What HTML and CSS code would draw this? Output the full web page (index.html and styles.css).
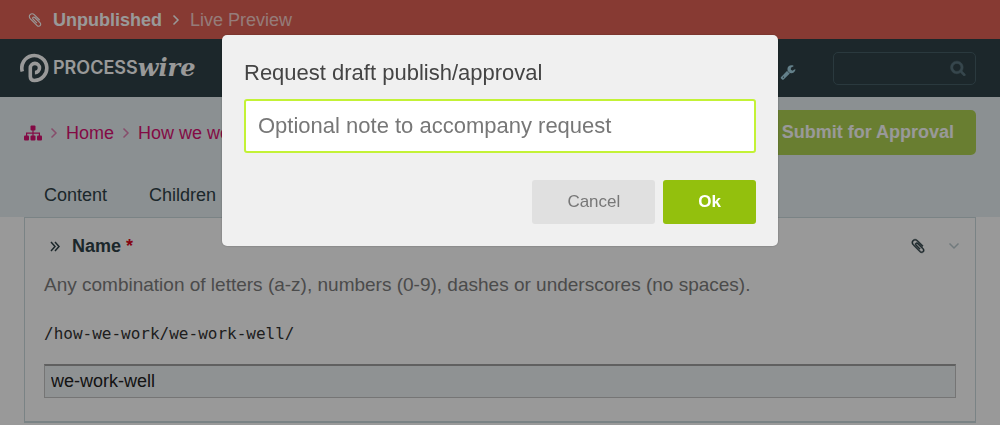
FILE: index.html
```html
<!DOCTYPE html>
<html lang="en">
<head>
    <meta charset="UTF-8">
    <meta name="viewport" content="width=device-width, initial-scale=1.0">
    <title>We work well - ProcessWire</title>
    <link rel="stylesheet" href="styles.css">
</head>
<body>
    <div class="notice">
        <svg class="icon" viewBox="0 0 1792 1792"><path d="M1596 1385q0 117-79 196t-196 79q-135 0-235-100l-777-776q-113-115-113-271 0-159 110-270t269-111q158 0 273 113l605 606q10 10 10 22 0 16-30.500 46.500t-46.500 30.500q-13 0-23-10l-606-607q-79-77-181-77-106 0-179 75t-73 181q0 105 76 181l776 777q63 63 145 63 64 0 106-42t42-106q0-82-63-145l-581-581q-26-24-60-24-29 0-48 19t-19 48q0 32 25 59l410 410q10 10 10 22 0 16-31 47t-47 31q-12 0-22-10l-410-410q-63-61-63-149 0-82 57-139t139-57q88 0 149 63l581 581q100 98 100 235z"/></svg>
        <strong>Unpublished</strong>
        <svg class="angle" viewBox="0 0 8 12"><path d="M1.500 1.500L6 6l-4.500 4.500"/></svg>
        <a href="#">Live Preview</a>
    </div>

    <header class="masthead">
        <a class="logo" href="#">
            <svg class="logo-mark" viewBox="0 0 30 30"><path d="M2.300 18.500A12.500 12.500 0 1 1 14.500 27.500Q10.300 27.500 10.300 23.500V15a4.600 4.600 0 1 1 4.600 4.600"/></svg>
            <span class="logo-process">PROCESS</span><span class="logo-wire">wire</span>
        </a>
        <div class="tools">
            <a class="wrench" href="#" aria-label="Tools">
                <svg class="icon" viewBox="0 0 1792 1792"><path d="M448 1472q0-26-19-45t-45-19-45 19-19 45 19 45 45 19 45-19 19-45zm644-420l-682 682q-37 37-90 37-52 0-91-37l-106-108q-38-36-38-90 0-53 38-91l681-681q39 98 114.500 173.500t173.500 114.500zm634-435q0 39-23 106-47 134-164.500 217.500t-258.500 83.500q-185 0-316.500-131.500t-131.500-316.500 131.500-316.500 316.500-131.500q58 0 121.500 16.500t107.500 46.500q16 11 16 28t-16 28l-293 169v224l193 107q5-3 79-48.500t135.500-81 70.500-35.500q15 0 23.500 10t8.500 25z"/></svg>
            </a>
            <label class="search">
                <input type="text" aria-label="Search">
                <svg class="icon" viewBox="0 0 1792 1792"><path d="M1216 832q0-185-131.500-316.500t-316.500-131.500-316.500 131.500-131.500 316.500 131.500 316.500 316.500 131.500 316.500-131.500 131.500-316.500zm512 832q0 52-38 90t-90 38q-54 0-90-38l-343-342q-179 124-399 124-143 0-273.500-55.500t-225-150-150-225-55.500-273.500 55.500-273.500 150-225 225-150 273.500-55.500 273.500 55.500 225 150 150 225 55.500 273.500q0 220-124 399l343 343q37 37 37 90z"/></svg>
            </label>
        </div>
    </header>

    <div class="heading">
        <div class="heading-row">
            <nav class="breadcrumb">
                <a href="#" aria-label="Pages">
                    <svg class="sitemap" viewBox="0 0 18 16"><rect x="6.500" y="0.500" width="5" height="5" rx="1"/><rect x="0" y="10.500" width="5" height="5" rx="1"/><rect x="6.500" y="10.500" width="5" height="5" rx="1"/><rect x="13" y="10.500" width="5" height="5" rx="1"/><path d="M2 11V7.500h14V11h-1.200V8.700H9.600V11H8.400V8.700H3.200V11zM8.400 5h1.200v3H8.400z"/></svg>
                </a>
                <svg class="angle" viewBox="0 0 8 12"><path d="M1.500 1.500L6 6l-4.500 4.500"/></svg>
                <a href="#">Home</a>
                <svg class="angle" viewBox="0 0 8 12"><path d="M1.500 1.500L6 6l-4.500 4.500"/></svg>
                <a href="#">How we work</a>
            </nav>
            <button class="btn-submit" type="button">Submit for Approval</button>
        </div>
        <nav class="tabs">
            <a href="#">Content</a>
            <a href="#">Children</a>
        </nav>
    </div>

    <main class="content">
        <section class="field">
            <div class="field-header">
                <svg class="double-angle" viewBox="0 0 10 11"><path d="M1 1l4 4.500L1 10M5 1l4 4.500L5 10"/></svg>
                <label for="name">Name <span class="required">*</span></label>
                <svg class="icon clip" viewBox="0 0 1792 1792"><path d="M1596 1385q0 117-79 196t-196 79q-135 0-235-100l-777-776q-113-115-113-271 0-159 110-270t269-111q158 0 273 113l605 606q10 10 10 22 0 16-30.500 46.500t-46.500 30.500q-13 0-23-10l-606-607q-79-77-181-77-106 0-179 75t-73 181q0 105 76 181l776 777q63 63 145 63 64 0 106-42t42-106q0-82-63-145l-581-581q-26-24-60-24-29 0-48 19t-19 48q0 32 25 59l410 410q10 10 10 22 0 16-31 47t-47 31q-12 0-22-10l-410-410q-63-61-63-149 0-82 57-139t139-57q88 0 149 63l581 581q100 98 100 235z"/></svg>
                <svg class="toggle" viewBox="0 0 12 8"><path d="M1.500 1.500L6 6l4.500-4.500"/></svg>
            </div>
            <p class="description">Any combination of letters (a-z), numbers (0-9), dashes or underscores (no spaces).</p>
            <p class="path">/how-we-work/we-work-well/</p>
            <input class="name-input" id="name" type="text" value="we-work-well">
        </section>
    </main>

    <div class="overlay">
        <form class="dialog" role="dialog">
            <label for="note">Request draft publish/approval</label>
            <input id="note" type="text" placeholder="Optional note to accompany request">
            <div class="dialog-buttons">
                <button class="btn-cancel" type="button">Cancel</button>
                <button class="btn-ok" type="button">Ok</button>
            </div>
        </form>
    </div>
</body>
</html>
```
FILE: styles.css
```css
*{
    box-sizing: border-box;
    padding: 0;
    margin: 0;
}
body{
    font-family: "Liberation Sans", Arial, sans-serif;
    font-size: 18px;
    line-height: 24px;
    color: #2f4248;
    background-color: #fff;
    overflow: hidden;
}
a{
    color: inherit;
    text-decoration: none;
}
svg{
    display: block;
    flex: none;
}
.icon{
    width: 16px;
    height: 16px;
    fill: currentColor;
}
.clip{
    stroke: currentColor;
    stroke-width: 50;
}
.angle{
    width: 8px;
    height: 12px;
    fill: none;
    stroke: currentColor;
    stroke-width: 1.5;
}

/* notice */
.notice{
    display: flex;
    align-items: center;
    gap: 10px;
    height: 39px;
    padding: 0 27px;
    background-color: #e26255;
    color: #fff;
}
.notice a{
    color: #f8cfcb;
}

/* masthead */
.masthead{
    display: flex;
    align-items: center;
    justify-content: space-between;
    height: 58px;
    padding: 0 24px 0 20px;
    background-color: #2f4248;
}
.logo{
    display: flex;
    align-items: center;
    color: #fff;
}
.logo-mark{
    width: 30px;
    height: 30px;
    margin-right: 3px;
    fill: none;
    stroke: currentColor;
    stroke-width: 3.6;
}
.logo-process{
    font-family: Inter, sans-serif;
    font-size: 18px;
    font-weight: 600;
}
.logo-wire{
    font-family: "DejaVu Serif", serif;
    font-size: 24px;
    font-weight: 700;
    font-style: italic;
}
.tools{
    display: flex;
    align-items: center;
    gap: 37px;
}
.wrench{
    padding-top: 8px;
    color: #a5d5e6;
}
.search{
    display: flex;
    align-items: center;
    width: 143px;
    height: 33px;
    padding: 0 9px;
    border: 1px solid #465f68;
    border-radius: 5px;
    color: #5b7680;
}
.search .icon{
    stroke: currentColor;
    stroke-width: 60;
}
.search input{
    flex: 1;
    min-width: 0;
    border: 0;
    outline: 0;
    background: none;
    color: #fff;
}

/* breadcrumb, submit button and tabs */
.heading{
    padding: 13px 24px 0;
    background-color: #e8f1f3;
}
.heading-row{
    display: flex;
    align-items: center;
    justify-content: space-between;
}
.breadcrumb{
    display: flex;
    align-items: center;
    gap: 8px;
    color: #db1174;
}
.breadcrumb .angle{
    opacity: 0.5;
}
.sitemap{
    width: 18px;
    height: 16px;
    fill: currentColor;
}
.btn-submit{
    height: 45px;
    padding: 0 22px;
    border: 0;
    border-radius: 5px;
    background-color: #b0d353;
    color: #fff;
    font: bold 18px "Liberation Sans", Arial, sans-serif;
}
.tabs{
    display: flex;
    gap: 42px;
    padding: 28px 20px 10px;
}

/* field */
.content{
    padding: 0 24px;
}
.field{
    padding: 16px 19px 23px;
    border: 1px solid #cbdade;
    border-bottom-width: 2px;
}
.field-header{
    display: flex;
    align-items: center;
    padding-left: 6px;
}
.field-header label{
    flex: 1;
    margin-left: 12px;
    font-weight: bold;
}
.required{
    color: #e00820;
}
.double-angle{
    width: 10px;
    height: 11px;
    fill: none;
    stroke: currentColor;
    stroke-width: 1.5;
}
.toggle{
    width: 12px;
    height: 8px;
    margin-left: 22px;
    margin-right: -4px;
    fill: none;
    stroke: #bccbd0;
    stroke-width: 1.5;
}
.description{
    margin-top: 15px;
    font-size: 19px;
    color: #7d7d7d;
}
.path{
    margin-top: 25px;
    font-family: "DejaVu Sans Mono", monospace;
    font-size: 16px;
    color: #333;
}
.name-input{
    display: block;
    width: 100%;
    height: 34px;
    margin-top: 18px;
    padding: 0 6px;
    border: 1px solid #c4c4c4;
    border-top: 2px solid #a0a0a0;
    background-color: #eff3f6;
    color: #222;
    font: 18px "Liberation Sans", Arial, sans-serif;
}

/* dialog */
.overlay{
    position: fixed;
    inset: 0;
    display: flex;
    align-items: flex-start;
    justify-content: center;
    padding-top: 35px;
    background-color: rgba(0, 0, 0, 0.4);
}
.dialog{
    width: 100%;
    max-width: 556px;
    padding: 22px;
    border-radius: 5px;
    background-color: #f0f0f0;
    box-shadow: 0 0 2px rgba(0, 0, 0, 0.3);
}
.dialog label{
    display: block;
    line-height: 32px;
    font-size: 22px;
    color: #444;
}
.dialog input{
    display: block;
    width: 100%;
    height: 54px;
    margin-top: 10px;
    padding: 0 12px;
    border: 2px solid #c3f236;
    border-radius: 3px;
    outline: 0;
    background-color: #fff;
    color: #444;
    font: 22px "Liberation Sans", Arial, sans-serif;
}
.dialog input::placeholder{
    color: #777;
}
.dialog-buttons{
    display: flex;
    justify-content: flex-end;
    gap: 8px;
    margin-top: 27px;
}
.dialog button{
    height: 44px;
    padding: 0 35px;
    border: 0;
    border-radius: 3px;
    font: 17px "Liberation Sans", Arial, sans-serif;
}
.dialog .btn-cancel{
    background-color: #e0e0e0;
    color: #777;
}
.dialog .btn-ok{
    background-color: #93c00d;
    color: #fff;
    font-weight: bold;
}
```
